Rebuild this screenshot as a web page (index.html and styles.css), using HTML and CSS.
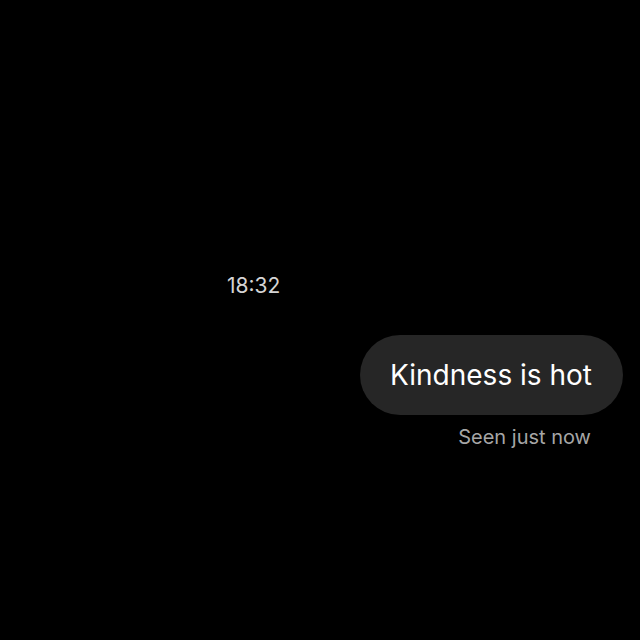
FILE: index.html
```html
<!DOCTYPE html>
<html>
<head>
<meta charset="utf-8">
<link rel="stylesheet" href="styles.css">
</head>
<body>
<div class="chat">
  <div class="time-row"><span class="time">18:32</span></div>
  <div class="msg-row">
    <div class="bubble">Kindness is hot</div>
  </div>
  <div class="seen-row"><span class="seen">Seen just now</span></div>
</div>
</body>
</html>
```
FILE: styles.css
```css
html, body {
  margin: 0;
  padding: 0;
  background: #000;
  width: 640px;
  height: 640px;
  overflow: hidden;
  font-family: Inter, "Noto Sans", "Liberation Sans", sans-serif;
}
.chat {
  display: flex;
  flex-direction: column;
  padding-top: 273px;
}
.time-row {
  display: flex;
  padding-left: 227px;
}
.time {
  color: #d4d4d4;
  font-size: 21px;
  line-height: 26px;
}
.msg-row {
  display: flex;
  justify-content: flex-end;
  padding-right: 17px;
  margin-top: 36px;
}
.bubble {
  background: #262626;
  color: #fff;
  font-size: 28px;
  line-height: 80px;
  height: 80px;
  padding: 0 31px 0 30px;
  border-radius: 40px;
}
.seen-row {
  display: flex;
  justify-content: flex-end;
  padding-right: 49px;
  margin-top: 9px;
}
.seen {
  color: #a6a6a6;
  font-size: 20px;
  line-height: 26px;
}
```
